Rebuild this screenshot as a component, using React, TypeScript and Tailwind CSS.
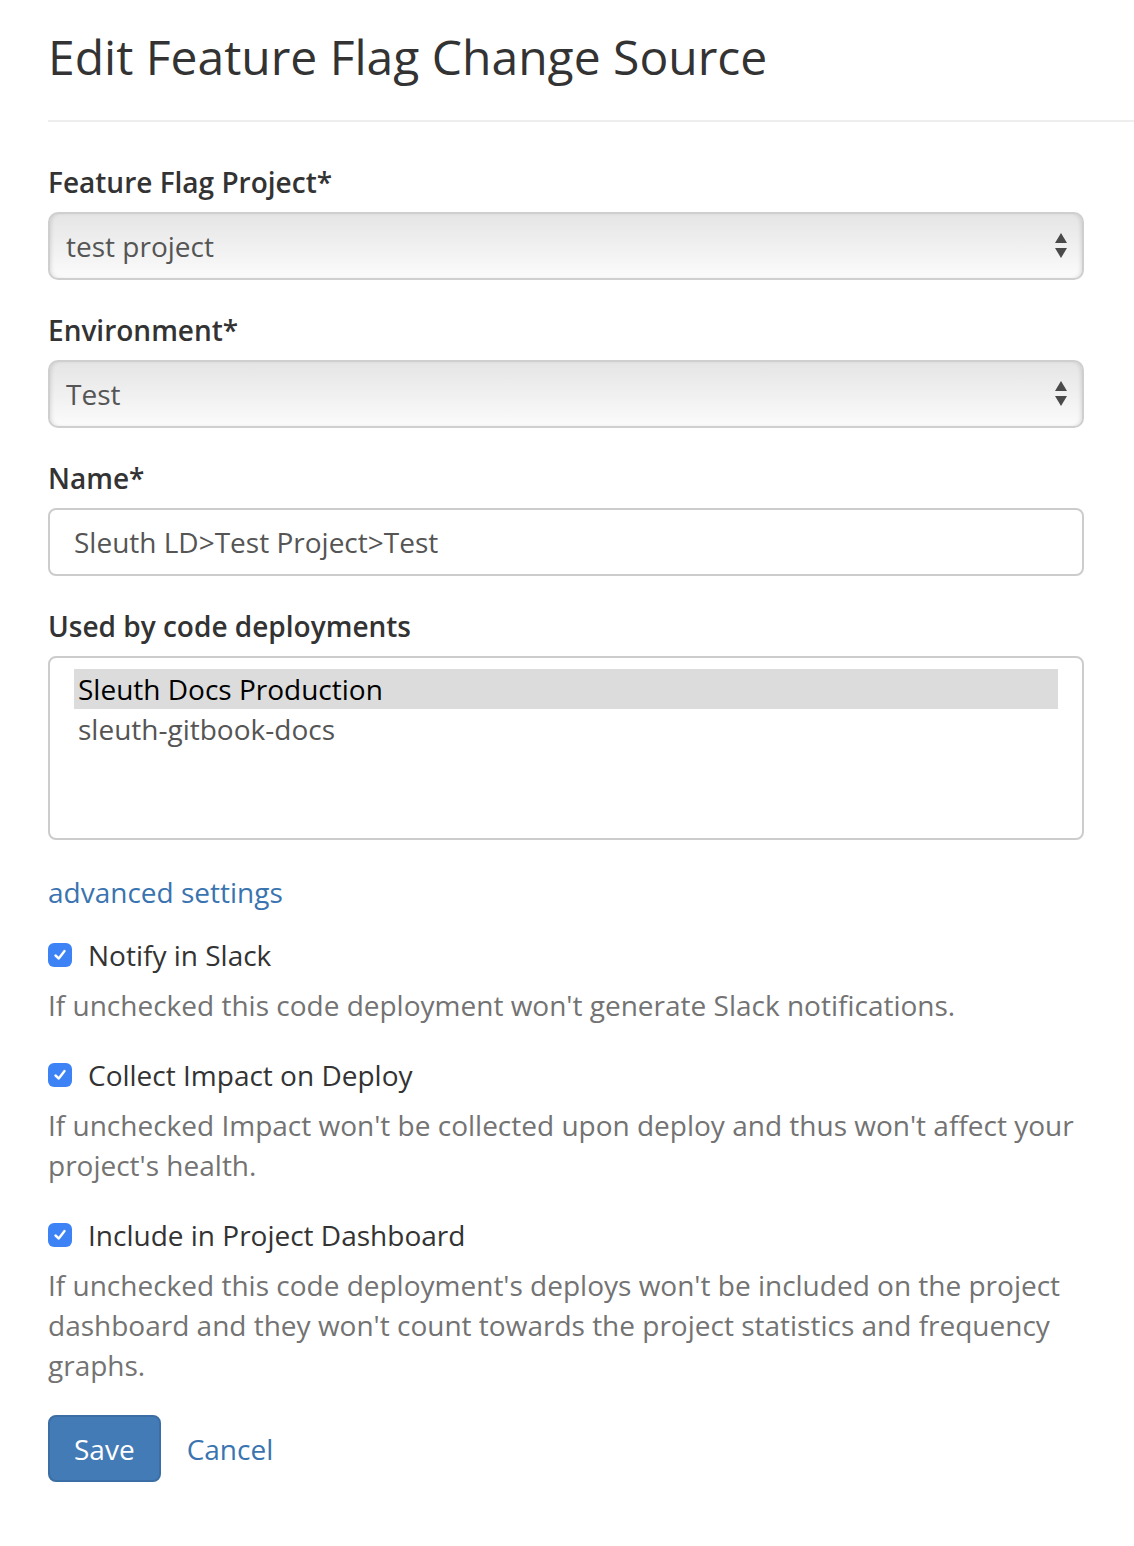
function SelectBox({ value }: { value: string }) {
  return (
    <div className="relative h-[68px] w-[1036px] rounded-[10px] border-2 border-[#cfcfcf] bg-linear-to-b from-[#e5e5e5] to-[#fbfbfb] shadow-[inset_3px_0_4px_-2px_rgba(0,0,0,0.12),inset_-3px_0_4px_-2px_rgba(0,0,0,0.12)] flex items-center pl-4">
      <span className="text-[28px] leading-[40px] text-[#555]">{value}</span>
      <svg
        className="absolute right-[14px] top-1/2 -translate-y-1/2"
        width="14"
        height="28"
        viewBox="0 0 14 28"
      >
        <path d="M7 1 L13 11 L1 11 Z" fill="#4a4a4a" />
        <path d="M1 16 L13 16 L7 26 Z" fill="#4a4a4a" />
      </svg>
    </div>
  );
}

function Check({ label, help }: { label: string; help: string[] }) {
  return (
    <div>
      <div className="flex items-center h-[40px]">
        <div className="w-[24px] h-[24px] rounded-[6px] bg-[#3d83f6] flex items-center justify-center">
          <svg width="16" height="16" viewBox="0 0 16 16">
            <path
              d="M3.5 8.5 L6.8 11.5 L12.5 4"
              fill="none"
              stroke="white"
              strokeWidth="2.4"
              strokeLinecap="round"
              strokeLinejoin="round"
            />
          </svg>
        </div>
        <span className="ml-[16px] text-[28px] leading-[40px] text-[#333]">{label}</span>
      </div>
      <p className="mt-[10px] text-[28px] leading-[40px] text-[#737373]">
        {help.map((l, i) => (
          <span key={i} className="block">
            {l}
          </span>
        ))}
      </p>
    </div>
  );
}

function App() {
  return (
    <div className="w-screen min-h-screen bg-white pl-[48px] font-['Open_Sans',sans-serif] text-[#333]">
      {/* Header */}
      <div className="pt-[30px] pb-[37px] border-b-2 border-[#eee]">
        <h1 className="text-[48px] leading-[53px] font-normal text-[#333]">
          Edit Feature Flag Change Source
        </h1>
      </div>

      <div className="w-[1036px] pt-[40px]">
        <div className="mb-[30px]">
          <label className="block mb-[10px] text-[28px] leading-[40px] font-semibold">
            Feature Flag Project*
          </label>
          <SelectBox value="test project" />
        </div>

        <div className="mb-[30px]">
          <label className="block mb-[10px] text-[28px] leading-[40px] font-semibold">
            Environment*
          </label>
          <SelectBox value="Test" />
        </div>

        <div className="mb-[30px]">
          <label className="block mb-[10px] text-[28px] leading-[40px] font-semibold">
            Name*
          </label>
          <div className="h-[68px] rounded-[8px] border-2 border-[#ccc] flex items-center px-[24px] text-[28px] text-[#555]">
            Sleuth LD&gt;Test Project&gt;Test
          </div>
        </div>

        <div className="mb-[32px]">
          <label className="block mb-[10px] text-[28px] leading-[40px] font-semibold">
            Used by code deployments
          </label>
          <div className="h-[184px] rounded-[8px] border-2 border-[#ccc] px-[24px] pt-[11px]">
            <div className="h-[40px] bg-[#dcdcdc] px-[4px] text-[28px] leading-[40px] text-black">
              Sleuth Docs Production
            </div>
            <div className="h-[40px] px-[4px] text-[28px] leading-[40px] text-[#555]">
              sleuth-gitbook-docs
            </div>
          </div>
        </div>

        <a className="block text-[28px] leading-[40px] text-[#3a74b0]">advanced settings</a>

        <div className="mt-[23px] flex flex-col gap-[30px]">
          <Check
            label="Notify in Slack"
            help={["If unchecked this code deployment won't generate Slack notifications."]}
          />
          <Check
            label="Collect Impact on Deploy"
            help={[
              "If unchecked Impact won't be collected upon deploy and thus won't affect your",
              "project's health.",
            ]}
          />
          <Check
            label="Include in Project Dashboard"
            help={[
              "If unchecked this code deployment's deploys won't be included on the project",
              "dashboard and they won't count towards the project statistics and frequency",
              "graphs.",
            ]}
          />
        </div>

        <div className="mt-[30px] flex items-center">
          <button className="h-[67px] px-[24px] rounded-[8px] border-2 border-[#3a6ea5] bg-[#437bb7] text-white text-[28px] leading-[40px]">
            Save
          </button>
          <a className="ml-[26px] text-[28px] leading-[40px] text-[#3a74b0]">Cancel</a>
        </div>
      </div>
    </div>
  );
}

export default App;
